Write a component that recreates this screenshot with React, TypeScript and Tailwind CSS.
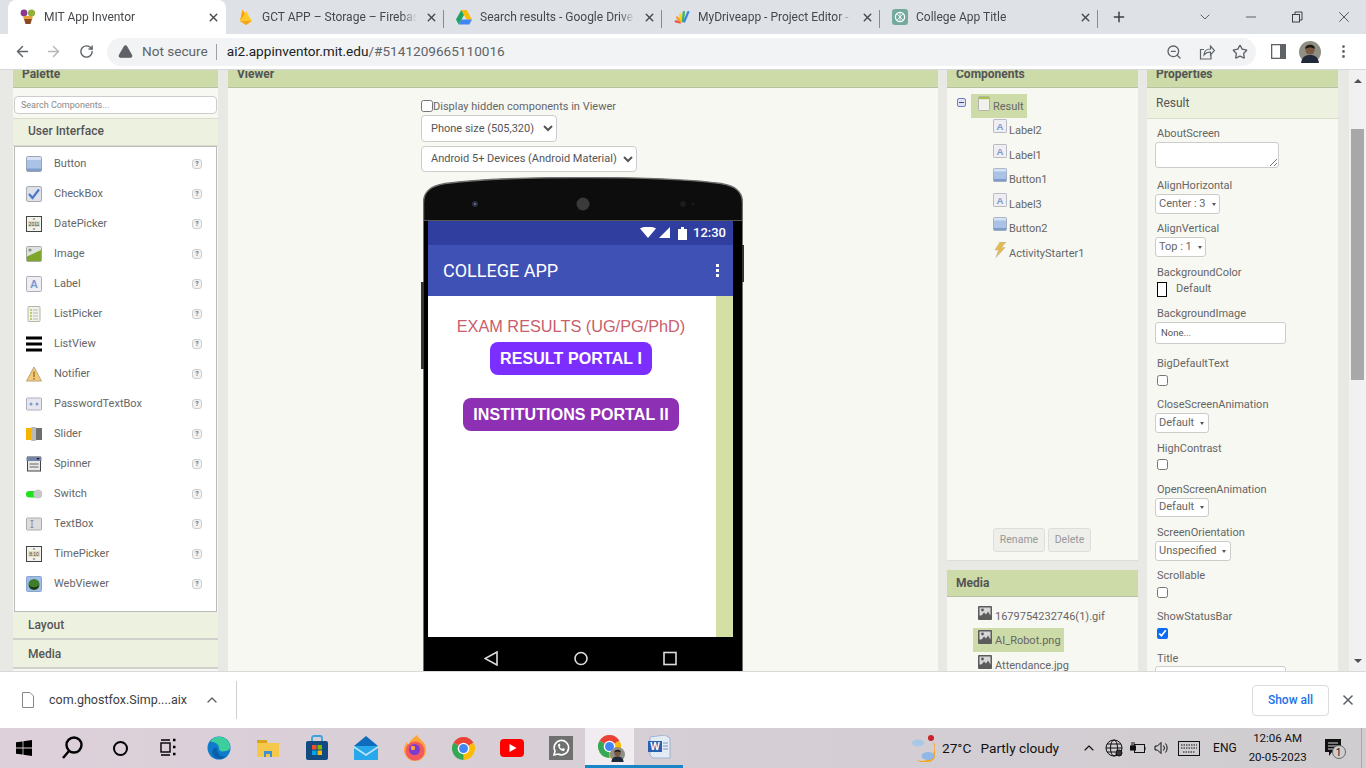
import React from 'react'
import {
    ArrowLeft,
    ArrowRight,
    ChevronDown,
    ChevronUp,
    EllipsisVertical,
    Minus,
    Plus,
    RotateCw,
    Star,
    TriangleAlert,
    X,
    ZoomOut,
} from 'lucide-react'

const ChromeLogo = ({ size = 16 }: { size?: number }) => (
    <svg width={size} height={size} viewBox="0 0 24 24">
        <path d="M12 12L2.47 6.5A11 11 0 0 1 21.53 6.5Z" fill="#ea4335" />
        <path d="M12 12L21.53 6.5A11 11 0 0 1 12 23Z" fill="#fbbc04" />
        <path d="M12 12L12 23A11 11 0 0 1 2.47 6.5Z" fill="#34a853" />
        <circle cx="12" cy="12" r="5.6" fill="#fff" />
        <circle cx="12" cy="12" r="4.3" fill="#4285f4" />
    </svg>
)

const AppInventorIcon = () => (
    <svg width="16" height="16" viewBox="0 0 16 16">
        <circle cx="4" cy="4" r="3.4" fill="#8a3a8f" />
        <circle cx="11.5" cy="4" r="3.6" fill="#8fb33a" />
        <rect x="3.5" y="7" width="9" height="3" fill="#e8a33d" />
        <path d="M4 10h8l-1.5 5h-5z" fill="#8c4a22" />
    </svg>
)

const FirebaseIcon = () => (
    <svg width="16" height="18" viewBox="0 0 16 18">
        <path d="M2 13L4.5 1.5 8 7z" fill="#ffa000" />
        <path d="M2 13L8.5 3 11 8.5 14 13 8 17z" fill="#ffca28" />
        <path d="M8 17l-6-4 12 0z" fill="#f6a51f" />
    </svg>
)

const DriveIcon = () => (
    <svg width="16" height="15" viewBox="0 0 16 15">
        <path d="M5.3 0h5.4l5.3 9.500h-5.4z" fill="#fbbc04" />
        <path d="M5.3 0L0 9.500 2.700 14.500 8 5z" fill="#1fa463" />
        <path d="M2.700 14.500h10.600l2.700-5H5.400z" fill="#4285f4" />
    </svg>
)

const MyDriveIcon = () => (
    <svg width="18" height="16" viewBox="0 0 18 16" fill="none" strokeLinecap="round" strokeWidth="2.600">
        <path d="M7 14L2 13" stroke="#ee4d4d" />
        <path d="M7.500 13L3.500 8.500" stroke="#f59a23" />
        <path d="M8.500 12.500L7 5.500" stroke="#f6cf2b" />
        <path d="M10 12.500L11 2.500" stroke="#3fb25d" />
        <path d="M11.500 13L16 2.500" stroke="#3d86e0" />
    </svg>
)

const ChatGptIcon = () => (
    <svg width="16" height="16" viewBox="0 0 16 16">
        <rect width="16" height="16" rx="3" fill="#74aa9c" />
        <circle cx="8" cy="8" r="4.600" fill="none" stroke="#fff" strokeWidth="1.300" />
        <path d="M5 5l6 6M11 5l-6 6M8 3.400v9.200" stroke="#fff" strokeWidth="0.800" />
    </svg>
)

const Tab = ({
    icon,
    title,
    active,
    divider,
}: {
    icon: React.ReactNode
    title: string
    active?: boolean
    divider?: boolean
}) => (
    <div
        className={`relative flex h-[34px] w-[218px] items-center gap-2 pl-3 ${
            active ? 'rounded-t-lg bg-white' : ''
        } ${divider ? 'after:absolute after:right-0 after:top-[10px] after:h-[18px] after:w-px after:bg-[#888a8d]' : ''}`}
    >
        <span className="flex w-4 shrink-0 justify-center">{icon}</span>
        <span className="w-[155px] overflow-hidden whitespace-nowrap text-[12px] text-[#45484c] [mask-image:linear-gradient(to_right,black_90%,transparent)]">
            {title}
        </span>
        <X size={13} strokeWidth={2.600} className="shrink-0 text-[#45484c]" />
    </div>
)

const TabStrip = () => (
    <div className="flex h-[34px] items-center bg-[#dee1e6] pl-2">
        <Tab icon={<AppInventorIcon />} title="MIT App Inventor" active />
        <Tab icon={<FirebaseIcon />} title="GCT APP – Storage – Firebase" divider />
        <Tab icon={<DriveIcon />} title="Search results - Google Drive" divider />
        <Tab icon={<MyDriveIcon />} title="MyDriveapp - Project Editor - " divider />
        <Tab icon={<ChatGptIcon />} title="College App Title" divider />
        <Plus size={16} strokeWidth={2.200} className="ml-[13px] text-[#3c4043]" />
        <div className="ml-[70px] flex items-center gap-[30px] text-[#3c4043]">
            <ChevronDown size={16} strokeWidth={1.200} />
            <Minus size={16} strokeWidth={1.200} />
            <svg width="16" height="16" viewBox="0 0 16 16" fill="none" stroke="currentColor">
                <rect x="3.500" y="5.500" width="7" height="7.500" />
                <path d="M6 5.500V3h7v8h-2.500" />
            </svg>
            <X size={18} strokeWidth={1.100} />
        </div>
    </div>
)

const Toolbar = () => (
    <div className="flex h-[36px] items-center border-b border-[#d5d7da] bg-white pl-[14px]">
        <ArrowLeft size={17} className="text-[#5f6368]" />
        <ArrowRight size={17} className="ml-[14px] text-[#b4b6b9]" />
        <RotateCw size={15} strokeWidth={2.300} className="ml-[17px] text-[#5f6368]" />
        <div className="ml-[13px] flex h-[28px] w-[1149px] items-center rounded-full bg-[#f1f3f4] pl-[10px]">
            <TriangleAlert size={15} fill="#5f6368" className="ml-[1px] text-[#5f6368]" />
            <span className="ml-[9px] text-[13.600px] text-[#5f6368]">Not secure</span>
            <span className="ml-[8px] h-[16px] w-px bg-[#9aa0a6]" />
            <span className="ml-[10px] text-[13.600px] text-[#202124]">
                ai2.appinventor.mit.edu<span className="text-[#5f6368]">/#5141209665110016</span>
            </span>
            <div className="ml-auto mr-[8px] flex items-center gap-[17px] text-[#5f6368]">
                <ZoomOut size={16} />
                <svg width="16" height="16" viewBox="0 0 16 16" fill="none" stroke="currentColor" strokeWidth="1.200">
                    <path d="M5 5.500H1.500v9.500h10.500v-4" />
                    <path d="M5 11c0-4 3-6 6.500-6V2l4 4.500-4 4.500V8c-3 0-5 1-6.500 3z" />
                </svg>
                <Star size={16} />
            </div>
        </div>
        <svg className="ml-[15px]" width="15" height="15" viewBox="0 0 15 15">
            <rect x="0.500" y="0.500" width="14" height="14" fill="#fff" stroke="#5f6368" strokeWidth="1.600" />
            <rect x="9" y="0" width="6" height="15" fill="#5f6368" />
        </svg>
        <div className="ml-[13px]">
            <Avatar size={22} />
        </div>
        <EllipsisVertical size={17} className="ml-[14px] text-[#5f6368]" />
    </div>
)

const Avatar = ({ size }: { size: number }) => (
    <svg width={size} height={size} viewBox="0 0 22 22">
        <circle cx="11" cy="11" r="11" fill="#8f8f84" />
        <path d="M2 22c1-7 5-8 9-8s8 1 9 8z" fill="#1e2a3a" />
        <circle cx="11" cy="9" r="4.600" fill="#7a5a44" />
        <path d="M6 8c0-5 10-6 10 0-3-2-7-2-10 0z" fill="#1c1815" />
    </svg>
)

/* palette + tree icons */
const ButtonIcon = () => (
    <svg width="16" height="16" viewBox="0 0 16 16">
        <rect x="0.500" y="0.500" width="15" height="15" rx="1.500" fill="#a9c2e6" stroke="#9aa5b8" />
        <rect x="1" y="1" width="14" height="3" fill="#d5e2f4" />
        <rect x="1" y="12.500" width="14" height="2.500" fill="#7f9dcb" />
    </svg>
)
const CheckIcon = () => (
    <svg width="16" height="16" viewBox="0 0 16 16">
        <rect x="0.500" y="0.500" width="15" height="15" rx="1.500" fill="#dfe1e8" stroke="#a9abb3" />
        <path d="M3 8l3.500 4L13 3.500" fill="none" stroke="#4a78cc" strokeWidth="2.200" />
    </svg>
)
const PickerIcon = ({ text }: { text: string }) => (
    <svg width="16" height="16" viewBox="0 0 16 16">
        <rect x="0.500" y="0.500" width="15" height="15" fill="#f3f3ee" stroke="#444" />
        <rect x="2" y="5" width="12" height="6" fill="#e6dcc0" />
        <text x="8" y="10" textAnchor="middle" fontSize="5" fill="#444" fontFamily="Liberation Sans">
            {text}
        </text>
        <path d="M6.500 3.500L8 2l1.500 1.500zM6.500 12.500L8 14l1.500-1.500z" fill="#666" />
    </svg>
)
const ImageIcon = () => (
    <svg width="16" height="16" viewBox="0 0 16 16">
        <rect x="0.500" y="0.500" width="15" height="15" rx="1" fill="#dfe3dd" stroke="#a5a8a5" />
        <circle cx="4" cy="4" r="1.600" fill="#8c8c8c" />
        <path d="M1 15V10.500L15 4v11z" fill="#7fa62c" />
    </svg>
)
const LabelIcon = () => (
    <svg width="16" height="16" viewBox="0 0 16 16">
        <rect x="0.500" y="0.500" width="15" height="15" rx="1" fill="#eeeef3" stroke="#adadb8" />
        <text
            x="8"
            y="12"
            textAnchor="middle"
            fontSize="11"
            fontWeight="700"
            fill="#7d9ad0"
            fontFamily="Liberation Sans"
        >
            A
        </text>
    </svg>
)
const ListPickerIcon = () => (
    <svg width="16" height="16" viewBox="0 0 16 16">
        <rect x="2" y="0.500" width="12" height="15" rx="1" fill="#f1f2ea" stroke="#b4b6aa" />
        <path d="M4 4h2M4 7h2M4 10h2M4 13h2" stroke="#a6c24a" strokeWidth="1.400" />
        <path d="M7 4h5M7 7h5M7 10h5M7 13h5" stroke="#b9b9b9" />
    </svg>
)
const ListViewIcon = () => (
    <svg width="16" height="16" viewBox="0 0 16 16">
        <path d="M0 2h16M0 8h16M0 14h16" stroke="#000" strokeWidth="3.200" />
    </svg>
)
const NotifierIcon = () => (
    <svg width="16" height="16" viewBox="0 0 16 16">
        <path d="M8 1l7.500 14H.5z" fill="#f3c878" stroke="#b8a57e" />
        <rect x="7.200" y="5.500" width="1.600" height="5.500" fill="#a67c32" />
        <rect x="7.200" y="12" width="1.600" height="1.600" fill="#a67c32" />
    </svg>
)
const PasswordIcon = () => (
    <svg width="16" height="16" viewBox="0 0 16 16">
        <rect x="0.500" y="2" width="15" height="12" rx="1" fill="#e6e7ee" stroke="#aeb0ba" />
        <circle cx="5" cy="8" r="1.500" fill="#7f9dcb" />
        <circle cx="11" cy="8" r="1.500" fill="#7f9dcb" />
    </svg>
)
const SliderIcon = () => (
    <svg width="16" height="16" viewBox="0 0 16 16">
        <rect x="0" y="2" width="16" height="12" fill="#6e6e6e" />
        <rect x="0" y="2" width="5" height="12" fill="#f5b400" />
        <rect x="5" y="1" width="5" height="14" rx="1" fill="#b9b9b9" />
    </svg>
)
const SpinnerIcon = () => (
    <svg width="16" height="16" viewBox="0 0 16 16">
        <rect x="1.500" y="1" width="13" height="14" fill="#e8e8e8" stroke="#444" />
        <rect x="0.500" y="1" width="15" height="4" fill="#7384a8" />
        <path d="M10.500 2h3l-1.500 2z" fill="#111" />
        <path d="M3.500 8h9M3.500 11h9" stroke="#666" />
    </svg>
)
const SwitchIcon = () => (
    <svg width="16" height="16" viewBox="0 0 16 16">
        <rect x="0" y="5" width="12" height="6.500" rx="3.200" fill="#22e01f" />
        <circle cx="12" cy="8" r="4.600" fill="#c9c9c9" />
    </svg>
)
const TextBoxIcon = () => (
    <svg width="16" height="16" viewBox="0 0 16 16">
        <rect x="0.500" y="2" width="15" height="12" rx="1" fill="#dcdcdc" stroke="#adadad" />
        <path d="M4.500 4.500h3M4.500 11.500h3M6 4.500v7" stroke="#7f8fb0" />
    </svg>
)
const WebViewerIcon = () => (
    <svg width="16" height="16" viewBox="0 0 16 16">
        <rect x="0.500" y="0.500" width="15" height="15" rx="1" fill="#9bbde8" stroke="#8aa4cc" />
        <circle cx="8" cy="8.500" r="5.600" fill="#3e7d2b" />
        <path d="M3 9c2 3 8 3 10 0 0 3-3 4.600-5 4.600S3 12 3 9z" fill="#24331e" />
    </svg>
)
const FormIcon = () => (
    <svg width="12" height="15" viewBox="0 0 12 15">
        <rect x="0.500" y="0.500" width="11" height="14" rx="1" fill="#f2f2ec" stroke="#b5b5ad" />
        <rect x="1" y="1" width="10" height="2.200" fill="#a6c24a" />
    </svg>
)
const BoltIcon = () => (
    <svg width="14" height="16" viewBox="0 0 14 16">
        <path d="M7 0h6L8.500 5.500H12L3 15.500l2.500-7.500H2z" fill="#e9b949" stroke="#b8b8b0" strokeWidth="0.600" />
    </svg>
)
const MediaFileIcon = () => (
    <svg className="mb-[6px]" width="14" height="14" viewBox="0 0 14 14">
        <rect width="14" height="14" rx="1" fill="#5c5c5c" />
        <rect x="1.500" y="1.500" width="11" height="8" fill="#d7d7d7" />
        <circle cx="4.500" cy="4" r="1.400" fill="#5c5c5c" />
        <path d="M1.500 12L6 6.500l2 2 2-3 2.500 4V12z" fill="#5c5c5c" />
    </svg>
)

const HelpIcon = () => (
    <span className="flex size-[10px] items-center justify-center rounded-[3px] border border-[#cfcfcf] bg-[#f2f2f2] text-[7px] font-bold leading-none text-[#777]">
        ?
    </span>
)

const paletteItems: [string, React.ReactNode][] = [
    ['Button', <ButtonIcon />],
    ['CheckBox', <CheckIcon />],
    ['DatePicker', <PickerIcon text="2011" />],
    ['Image', <ImageIcon />],
    ['Label', <LabelIcon />],
    ['ListPicker', <ListPickerIcon />],
    ['ListView', <ListViewIcon />],
    ['Notifier', <NotifierIcon />],
    ['PasswordTextBox', <PasswordIcon />],
    ['Slider', <SliderIcon />],
    ['Spinner', <SpinnerIcon />],
    ['Switch', <SwitchIcon />],
    ['TextBox', <TextBoxIcon />],
    ['TimePicker', <PickerIcon text="8:10" />],
    ['WebViewer', <WebViewerIcon />],
]

const PanelHeader = ({ title }: { title: string }) => (
    <div className="flex h-[27px] items-center border-b border-[#b7c0a0] bg-[#cddba9] pl-[9px] text-[12px] font-bold text-[#555]">
        {title}
    </div>
)

const Palette = () => (
    <div className="ml-[13px] flex w-[205px] shrink-0 flex-col bg-[#f7f8f2]">
        <PanelHeader title="Palette" />
        <div className="h-[30px] px-px pt-[3px]">
            <input
                readOnly
                placeholder="Search Components..."
                className="h-[18px] w-[203px] rounded-[4px] border border-[#ccc] bg-white px-[6px] text-[9px] outline-none placeholder:text-[#888]"
            />
        </div>
        <div className="flex h-[28px] items-center border-y border-[#d8dcc8] bg-[#edf1e0] pb-[2px] pl-[15px] text-[12px] font-medium text-[#555]">
            User Interface
        </div>
        <div className="mx-px h-[466px] border border-[#bbb] bg-white pt-[2px]">
            {paletteItems.map(([name, icon]) => (
                <div key={name} className="flex h-[30px] items-center pl-[11px] pr-[14px]">
                    {icon}
                    <span className="ml-[12px] text-[11px] text-[#666]">{name}</span>
                    <span className="ml-auto">
                        <HelpIcon />
                    </span>
                </div>
            ))}
        </div>
        <div className="flex h-[28px] items-center border-b-2 border-[#d0d0cc] bg-[#edf1e0] pl-[15px] text-[12px] font-medium text-[#555]">
            Layout
        </div>
        <div className="flex h-[29px] items-center border-b-2 border-[#d0d0cc] bg-[#edf1e0] pl-[15px] text-[12px] font-medium text-[#555]">
            Media
        </div>
    </div>
)

const PhoneTop = () => (
    <svg width="320" height="44" viewBox="0 0 320 44" className="block">
        <path
            d="M0.500 44V26C0.500 14 8 9 22 6.500 60 1.500 110 0.500 160 0.500S260 1.500 298 6.500C312 9 319.500 14 319.500 26V44Z"
            fill="#0d0d0d"
            stroke="#6f6f6f"
            strokeWidth="1.400"
        />
        <circle cx="52" cy="27" r="3" fill="#2a2c3a" />
        <circle cx="52" cy="27" r="1.200" fill="#5a64a0" />
        <circle cx="160" cy="27" r="6.500" fill="#3a3a3a" />
        <circle cx="260" cy="27" r="3" fill="#1c1c1c" />
        <circle cx="270" cy="27" r="1.500" fill="#1c1c1c" />
    </svg>
)

const Phone = () => (
    <div className="relative ml-[195px] mt-[5px] w-[320px]">
        <span className="absolute -left-[2px] top-[105px] h-[87px] w-[3px] bg-[#333]" />
        <span className="absolute -right-[1px] top-[68px] h-[37px] w-[2px] bg-[#333]" />
        <PhoneTop />
        <div className="border-x border-x-[#6f6f6f] bg-black pl-[4px] pr-[9px]">
            <div className="flex h-[24px] items-center justify-end bg-[#303f9f] pr-[7px] text-white">
                <svg width="30" height="12" viewBox="0 0 30 12" fill="#fff">
                    <path d="M0 1.500C5-1 11-1 16 1.500L8 11z" />
                    <path d="M31 0v11H20z" transform="translate(-1 0)" />
                </svg>
                <svg className="ml-[8px]" width="9" height="13" viewBox="0 0 9 13" fill="#fff">
                    <path d="M0 2h3V0h3v2h3v11H0z" />
                </svg>
                <span className="ml-[6px] text-[13px] font-medium">12:30</span>
            </div>
            <div className="flex h-[51px] items-center bg-[#3f51b5] pl-[15px] pr-[14px] text-white">
                <span className="text-[18px]">COLLEGE APP</span>
                <span className="ml-auto flex flex-col gap-[2px]">
                    <i className="size-[3px] bg-white" />
                    <i className="size-[3px] bg-white" />
                    <i className="size-[3px] bg-white" />
                </span>
            </div>
            <div className="flex h-[341px]">
                <div className="flex flex-1 flex-col items-center bg-white pr-[2px] pt-[21px] font-['Liberation_Sans',sans-serif]">
                    <div className="h-[19px] whitespace-nowrap text-[16.300px] leading-[19px] text-[#c9606b]">
                        EXAM RESULTS (UG/PG/PhD)
                    </div>
                    <button className="mt-[6px] flex h-[33px] w-[162px] items-center justify-center rounded-[8px] bg-[#7b2eff] text-[16px] font-bold tracking-[0.100px] text-white">
                        RESULT PORTAL I
                    </button>
                    <button className="mt-[23px] flex h-[33px] w-[216px] items-center justify-center rounded-[8px] bg-[#8e30b4] text-[16px] font-bold tracking-[0.100px] text-white">
                        INSTITUTIONS PORTAL II
                    </button>
                </div>
                <div className="w-[17px] bg-[#d3dfa5]" />
            </div>
            <div className="flex h-[50px] items-start justify-between pl-[56px] pr-[56px] pt-[14px]">
                <svg width="14" height="15" viewBox="0 0 14 15" fill="none" stroke="#ddd" strokeWidth="1.600">
                    <path d="M13 1v13L1 7.500z" />
                </svg>
                <svg width="14" height="15" viewBox="0 0 14 15" fill="none" stroke="#ddd" strokeWidth="1.600">
                    <circle cx="7" cy="7.500" r="6" />
                </svg>
                <svg width="14" height="15" viewBox="0 0 14 15" fill="none" stroke="#ddd" strokeWidth="1.600">
                    <rect x="1" y="1.500" width="12" height="12" />
                </svg>
            </div>
        </div>
    </div>
)

const Viewer = () => (
    <div className="ml-[10px] flex w-[710px] shrink-0 flex-col bg-[#f7f8f2]">
        <PanelHeader title="Viewer" />
        <div className="ml-[193px] mt-[12px] flex h-[15px] items-center">
            <input type="checkbox" readOnly className="-mt-[3px] size-[12px]" />
            <span className="text-[11px] text-[#666]">Display hidden components in Viewer</span>
        </div>
        <select className="ml-[193px] h-[27px] w-[136px] rounded-[4px] border border-[#ccc] bg-white pb-px pl-[5px] text-[11px] text-[#555]">
            <option>Phone size (505,320)</option>
        </select>
        <select className="ml-[193px] mt-[4px] h-[26px] w-[216px] rounded-[4px] border border-[#ccc] bg-white pb-px pl-[5px] text-[11px] text-[#555]">
            <option>Android 5+ Devices (Android Material)</option>
        </select>
        <Phone />
    </div>
)

const TreeRow = ({ icon, name }: { icon: React.ReactNode; name: string }) => (
    <div className="ml-[46px] flex h-[24.500px] items-start">
        <span className="mt-[1px] flex w-[16px] shrink-0">{icon}</span>
        <span className="mt-[6px] text-[11px] leading-[14px] text-[#666]">{name}</span>
    </div>
)

const SmallIcon = ({ children }: { children: React.ReactNode }) => (
    <span className="block size-[14px] [&>svg]:size-[14px]">{children}</span>
)

const Components = () => (
    <div className="ml-[9px] flex w-[191px] shrink-0 flex-col">
        <PanelHeader title="Components" />
        <div className="flex h-[473px] flex-col border-b border-[#ddd] bg-[#f7f8f2]">
            <div className="mt-[6px] flex h-[24px] items-center pl-[10px]">
                <span className="mb-[7px] flex size-[9px] items-center justify-center rounded-[2px] border border-[#6f7fc0] bg-[#dfe3f4]">
                    <i className="h-px w-[5px] bg-[#3a4a90]" />
                </span>
                <div className="ml-[5px] flex h-[24px] w-[56px] items-center bg-[#cddba9] pl-[7px]">
                    <span className="mb-[5px] flex">
                        <FormIcon />
                    </span>
                    <span className="ml-[3px] mt-[2px] text-[11px] text-[#666]">Result</span>
                </div>
            </div>
            <TreeRow icon={<SmallIcon><LabelIcon /></SmallIcon>} name="Label2" />
            <TreeRow icon={<SmallIcon><LabelIcon /></SmallIcon>} name="Label1" />
            <TreeRow icon={<SmallIcon><ButtonIcon /></SmallIcon>} name="Button1" />
            <TreeRow icon={<SmallIcon><LabelIcon /></SmallIcon>} name="Label3" />
            <TreeRow icon={<SmallIcon><ButtonIcon /></SmallIcon>} name="Button2" />
            <TreeRow icon={<BoltIcon />} name="ActivityStarter1" />
            <div className="ml-[46px] mt-auto mb-[8px] flex gap-[3px]">
                <button className="h-[24px] w-[52px] rounded-[3px] border border-[#ddd] bg-[#eeeeea] text-[10.500px] text-[#999]">
                    Rename
                </button>
                <button className="h-[24px] w-[43px] rounded-[3px] border border-[#ddd] bg-[#eeeeea] text-[10.500px] text-[#999]">
                    Delete
                </button>
            </div>
        </div>
        <div className="mt-[9px]">
            <PanelHeader title="Media" />
            <div className="h-[80px] bg-[#f7f8f2] pt-[7px]">
                <div className="ml-[31px] flex h-[24px] items-center">
                    <MediaFileIcon />
                    <span className="ml-[3px] mt-[2px] text-[11px] text-[#666]">1679754232746(1).gif</span>
                </div>
                <div className="ml-[26px] flex h-[24px] w-[91px] items-center bg-[#cddba9] pl-[5px]">
                    <MediaFileIcon />
                    <span className="ml-[3px] mt-[2px] text-[11px] text-[#666]">AI_Robot.png</span>
                </div>
                <div className="ml-[31px] mt-px flex h-[24px] items-center">
                    <MediaFileIcon />
                    <span className="ml-[3px] mt-[2px] text-[11px] text-[#666]">Attendance.jpg</span>
                </div>
            </div>
        </div>
    </div>
)

const PropLabel = ({ text, className }: { text: string; className: string }) => (
    <div className={`h-[14px] pl-[10px] text-[11px] leading-[14px] text-[#666] ${className}`}>{text}</div>
)

const PropSelect = ({ text, className }: { text: string; className: string }) => (
    <div
        className={`ml-[8px] mt-px flex items-center rounded-[3px] border border-[#ccc] bg-white pl-[3px] text-[11px] text-[#666] ${className}`}
    >
        {text}
        <i className="ml-[6px] border-x-[2.500px] border-t-[3px] border-x-transparent border-t-[#555]" />
    </div>
)

const PropCheck = ({ className, checked }: { className: string; checked?: boolean }) => (
    <input
        type="checkbox"
        readOnly
        checked={!!checked}
        className={`ml-[10px] block size-[11px] accent-[#0b6bf5] ${className}`}
    />
)

const Properties = () => (
    <div className="ml-[9px] flex w-[191px] shrink-0 flex-col bg-[#f7f8f2]">
        <PanelHeader title="Properties" />
        <div className="flex h-[31px] items-center border-b border-[#d8dcc8] bg-[#edf1e0] pl-[9px] text-[12px] text-[#555]">
            Result
        </div>
        <PropLabel text="AboutScreen" className="mt-[8px]" />
        <div className="relative ml-[8px] mt-px h-[26px] w-[124px] rounded-[3px] border border-[#ccc] bg-white">
            <svg className="absolute bottom-0 right-0" width="9" height="9" viewBox="0 0 9 9" stroke="#777">
                <path d="M1 8l7-7M5 8l3-3" />
            </svg>
        </div>
        <PropLabel text="AlignHorizontal" className="mt-[11px]" />
        <PropSelect text="Center : 3" className="h-[20px] w-[65px]" />
        <PropLabel text="AlignVertical" className="mt-[8px]" />
        <PropSelect text="Top : 1" className="h-[20px] w-[51px]" />
        <PropLabel text="BackgroundColor" className="mt-[9px]" />
        <div className="ml-[10px] mt-[2px] flex h-[15px] items-center">
            <span className="h-[15px] w-[10px] border border-black bg-white" />
            <span className="ml-[9px] text-[11px] text-[#666]">Default</span>
        </div>
        <PropLabel text="BackgroundImage" className="mt-[10px]" />
        <div className="ml-[8px] mt-px flex h-[22px] w-[131px] items-center rounded-[3px] border border-[#ccc] bg-white pl-[5px] text-[9.500px] text-[#555]">
            None...
        </div>
        <PropLabel text="BigDefaultText" className="mt-[13px]" />
        <PropCheck className="mt-[4px]" />
        <PropLabel text="CloseScreenAnimation" className="mt-[12px]" />
        <PropSelect text="Default" className="h-[20px] w-[54px]" />
        <PropLabel text="HighContrast" className="mt-[9px]" />
        <PropCheck className="mt-[3px]" />
        <PropLabel text="OpenScreenAnimation" className="mt-[13px]" />
        <PropSelect text="Default" className="h-[19px] w-[54px]" />
        <PropLabel text="ScreenOrientation" className="mt-[9px]" />
        <PropSelect text="Unspecified" className="h-[20px] w-[76px]" />
        <PropLabel text="Scrollable" className="mt-[8px]" />
        <PropCheck className="mt-[4px]" />
        <PropLabel text="ShowStatusBar" className="mt-[12px]" />
        <PropCheck className="mt-[4px]" checked />
        <PropLabel text="Title" className="mt-[13px]" />
        <div className="ml-[8px] h-[22px] w-[131px] rounded-[3px] border border-[#ccc] bg-white" />
    </div>
)

const PageScrollbar = () => (
    <div className="ml-[11px] flex w-[17px] shrink-0 flex-col items-center bg-[#f1f1f1]">
        <i className="mt-[18px] border-x-[4px] border-b-[4px] border-x-transparent border-b-[#505050]" />
        <div className="mt-[46px] h-[251px] w-[13px] bg-[#a8a8a8]" />
        <i className="mt-[279px] border-x-[4px] border-t-[4px] border-x-transparent border-t-[#505050]" />
    </div>
)

const DownloadBar = () => (
    <div className="flex h-[57px] items-center border-t border-[#d9d9d9] bg-white">
        <svg className="ml-[22px]" width="12" height="16" viewBox="0 0 12 16" fill="#fff" stroke="#888">
            <path d="M0.500 0.500h7.500l3.500 3.500v11.500H0.500z" />
        </svg>
        <span className="ml-[15px] text-[12.500px] text-[#3c4043]">com.ghostfox.Simp....aix</span>
        <ChevronUp size={16} className="ml-[17px] text-[#5f6368]" />
        <span className="ml-[16px] h-[38px] w-px bg-[#d0d0d0]" />
        <button className="ml-auto h-[31px] w-[77px] rounded-[4px] border border-[#dadce0] text-[12px] font-medium text-[#1a73e8]">
            Show all
        </button>
        <X size={16} strokeWidth={2.400} className="ml-[11px] mr-[10px] text-[#5f6368]" />
    </div>
)

/* taskbar */
const WindowsLogo = () => (
    <svg width="16" height="16" viewBox="0 0 16 16" fill="#000">
        <path d="M0 2.300l6.600-.9v6.200H0zM7.400 1.300L16 0v7.600H7.400zM0 8.400h6.600v6.200L0 13.700zM7.400 8.400H16V16l-8.600-1.200z" />
    </svg>
)
const SearchGlyph = () => (
    <svg width="22" height="24" viewBox="0 0 22 24" fill="none" stroke="#000" strokeWidth="2.400">
        <circle cx="13" cy="9" r="7.500" />
        <path d="M8 15l-6 7" />
    </svg>
)
const TaskViewGlyph = () => (
    <svg width="16" height="20" viewBox="0 0 16 20" fill="none" stroke="#000" strokeWidth="1.400">
        <rect x="1" y="5" width="9" height="9" />
        <path d="M1 2h9M1 17h9" />
        <path d="M13 2h2.500M13 9h2.500M13 16h2.500" strokeWidth="2.600" />
    </svg>
)
const EdgeLogo = () => (
    <svg width="24" height="24" viewBox="0 0 24 24">
        <circle cx="12" cy="12" r="11.500" fill="#0f7ccb" />
        <path d="M3 6c4-7 15-7 19 1 2 4 1 8-3 8-5 1-7 0-7-3 0-5-7-7-9-6z" fill="#3ccf9c" />
        <path d="M10 12c0 6 4 10 9 8-3 4-10 4-13-1-2-3 0-8 4-7z" fill="#0a5fa8" />
    </svg>
)
const FolderLogo = () => (
    <svg width="22" height="22" viewBox="0 0 22 22">
        <path d="M0 3h9l2 3h11v14H0z" fill="#f5c84b" />
        <rect x="0" y="3" width="10" height="3" fill="#d9a520" />
        <path d="M7 20v-6h8v6h-2v-3h-4v3z" fill="#3f8fd2" />
    </svg>
)
const StoreLogo = () => (
    <svg width="22" height="26" viewBox="0 0 22 26">
        <path d="M6 6V3a2 2 0 0 1 2-2h6a2 2 0 0 1 2 2v3" fill="none" stroke="#38a3dc" strokeWidth="1.800" />
        <rect x="0" y="6" width="22" height="19" rx="2" fill="#134a80" />
        <rect x="6" y="10" width="4.500" height="4.500" fill="#f25022" />
        <rect x="11.500" y="10" width="4.500" height="4.500" fill="#7fba00" />
        <rect x="6" y="15.500" width="4.500" height="4.500" fill="#00a4ef" />
        <rect x="11.500" y="15.500" width="4.500" height="4.500" fill="#ffb900" />
    </svg>
)
const MailLogo = () => (
    <svg width="24" height="24" viewBox="0 0 24 24">
        <path d="M0 10L12 0l12 10v14H0z" fill="#0f6cbd" />
        <rect x="0" y="10" width="24" height="14" fill="#28a8ea" />
        <path d="M0 10l12 8 12-8v2L12 20 0 12z" fill="#bfe6fb" />
    </svg>
)
const FirefoxLogo = () => (
    <svg width="24" height="26" viewBox="0 0 24 26">
        <path d="M14 0c1 4 9 6 9 15a11 11 0 0 1-22 0c0-3 1-6 3-8 0 2 1 3 2 3 0-4 4-7 8-10z" fill="#ffa436" />
        <circle cx="12" cy="16" r="9.500" fill="#ef3f6e" opacity="0.750" />
        <circle cx="11.500" cy="14.500" r="5.500" fill="#7a3ccf" />
        <circle cx="10" cy="13" r="2.200" fill="#ffa436" />
    </svg>
)
const YoutubeLogo = () => (
    <svg width="24" height="18" viewBox="0 0 24 18">
        <rect width="24" height="18" rx="4" fill="#f00" />
        <path d="M9.500 5v8l7-4z" fill="#fff" />
    </svg>
)
const WhatsappLogo = () => (
    <svg width="24" height="24" viewBox="0 0 24 24">
        <rect width="24" height="24" fill="#707070" />
        <path d="M5 19l1-4a7.200 7.200 0 1 1 3 3z" fill="none" stroke="#fff" strokeWidth="1.600" />
        <path d="M9 8.500c0 4 3 6.500 6 6.500l1-2-2-1-1 1c-1-.5-2-1.500-2.500-2.500l1-1-1-2z" fill="#fff" />
    </svg>
)
const WordLogo = () => (
    <svg width="24" height="24" viewBox="0 0 24 24">
        <path d="M3 2l15-2 5 3v20H6l-3-3z" fill="#e3ebf5" stroke="#9fb4d0" />
        <rect x="1" y="6" width="14" height="11" fill="#2b5fb0" />
        <text x="8" y="15" textAnchor="middle" fontSize="10" fontWeight="700" fill="#fff" fontFamily="Liberation Sans">
            W
        </text>
        <path d="M16 8h5M16 11h5M16 14h5" stroke="#7b96c0" />
    </svg>
)

const TaskIcon = ({
    children,
    active,
    open,
}: {
    children: React.ReactNode
    active?: boolean
    open?: boolean
}) => (
    <div
        className={`flex h-[40px] w-[48.800px] items-center justify-center ${
            active ? 'bg-[#f0ecf0]' : ''
        } ${open ? 'border-b-[3px] border-b-[#1a86c8]' : ''}`}
    >
        {children}
    </div>
)

const Taskbar = () => (
    <div className="flex h-[40px] items-center bg-linear-to-r from-[#ddd0da] to-[#cfcdd0] text-[#111]">
        <div className="flex h-[40px] w-[48px] items-center justify-center">
            <WindowsLogo />
        </div>
        <div className="flex h-[40px] w-[48px] items-center justify-center">
            <SearchGlyph />
        </div>
        <div className="flex h-[40px] w-[48px] items-center justify-center">
            <span className="size-[15px] rounded-full border-[2.500px] border-black" />
        </div>
        <div className="flex h-[40px] w-[48px] items-center justify-center">
            <TaskViewGlyph />
        </div>
        <div className="ml-[3px] flex">
            <TaskIcon><EdgeLogo /></TaskIcon>
            <TaskIcon><FolderLogo /></TaskIcon>
            <TaskIcon><StoreLogo /></TaskIcon>
            <TaskIcon><MailLogo /></TaskIcon>
            <TaskIcon><FirefoxLogo /></TaskIcon>
            <TaskIcon><ChromeLogo size={25} /></TaskIcon>
            <TaskIcon><YoutubeLogo /></TaskIcon>
            <TaskIcon><WhatsappLogo /></TaskIcon>
            <TaskIcon active open>
                <div className="relative">
                    <ChromeLogo size={25} />
                    <span className="absolute -bottom-[3px] -right-[3px]">
                        <Avatar size={15} />
                    </span>
                </div>
            </TaskIcon>
            <TaskIcon open><WordLogo /></TaskIcon>
        </div>
        <svg className="ml-[228px]" width="24" height="28" viewBox="0 0 24 28">
            <path d="M6 26A12 12 0 0 0 22 8 13 13 0 0 1 6 26z" fill="#f5a623" />
            <circle cx="20" cy="4" r="3" fill="#c8232c" />
            <ellipse cx="7" cy="9" rx="6" ry="3.600" fill="#a9c8e8" />
            <ellipse cx="17" cy="22" rx="6.500" ry="4" fill="#8fb8e6" />
        </svg>
        <span className="ml-[7px] text-[13.700px]">27°C</span>
        <span className="ml-[9px] text-[13.700px]">Partly cloudy</span>
        <ChevronUp size={16} strokeWidth={1.600} className="ml-[22px]" />
        <svg className="ml-[8px]" width="18" height="18" viewBox="0 0 18 18" fill="none" stroke="#111">
            <circle cx="9" cy="9" r="8" />
            <ellipse cx="9" cy="9" rx="3.500" ry="8" />
            <path d="M1 9h16M2 5h14M2 13h14" />
            <circle cx="14" cy="14" r="3" fill="#333" />
        </svg>
        <svg className="ml-[7px]" width="16" height="14" viewBox="0 0 16 14" fill="none" stroke="#111">
            <rect x="4.500" y="3.500" width="10" height="8" />
            <rect x="0.500" y="5" width="5" height="4" fill="#111" />
            <path d="M2 1v4M4 1v4M15 6v3" />
        </svg>
        <svg className="ml-[8px]" width="16" height="16" viewBox="0 0 16 16" fill="none" stroke="#111">
            <path d="M1 6h2.500L7 2.500v11L3.500 10H1z" />
            <path d="M9.500 5.500a4 4 0 0 1 0 5M11.500 3.500a7 7 0 0 1 0 9" />
        </svg>
        <svg className="ml-[8px]" width="22" height="15" viewBox="0 0 22 15" fill="none" stroke="#111">
            <rect x="0.500" y="0.500" width="21" height="14" />
            <path d="M3 4h16M3 7h16M5 11h12" strokeDasharray="1.500 1" />
        </svg>
        <span className="ml-[13px] text-[12px]">ENG</span>
        <div className="ml-[10px] flex w-[62px] flex-col items-center text-[11.500px] leading-[19px]">
            <span>12:06 AM</span>
            <span>20-05-2023</span>
        </div>
        <div className="relative ml-[16px]">
            <svg className="block" width="16" height="18" viewBox="0 0 16 18">
                <path d="M0 0h16v13H7l-3 4v-4H0z" fill="#111" />
                <path d="M3 4h10M3 7h10M3 10h7" stroke="#ddd" />
            </svg>
            <span className="absolute -bottom-[2px] -right-[5px] flex size-[14px] items-center justify-center rounded-full border border-[#666] bg-[#d0cdd0] text-[10px]">
                1
            </span>
        </div>
        <span className="ml-[20px] h-[40px] w-px bg-[#aaa]" />
    </div>
)

export default function App() {
    return (
        <div className="flex h-[768px] w-[1366px] flex-col overflow-hidden bg-white font-['Roboto',sans-serif]">
            <TabStrip />
            <Toolbar />
            <div className="flex h-[601px] overflow-hidden bg-[#e8e8e4]">
                <div className="-mt-[9px] flex h-[900px]">
                    <Palette />
                    <Viewer />
                    <Components />
                    <Properties />
                    <PageScrollbar />
                </div>
            </div>
            <DownloadBar />
            <Taskbar />
        </div>
    )
}
